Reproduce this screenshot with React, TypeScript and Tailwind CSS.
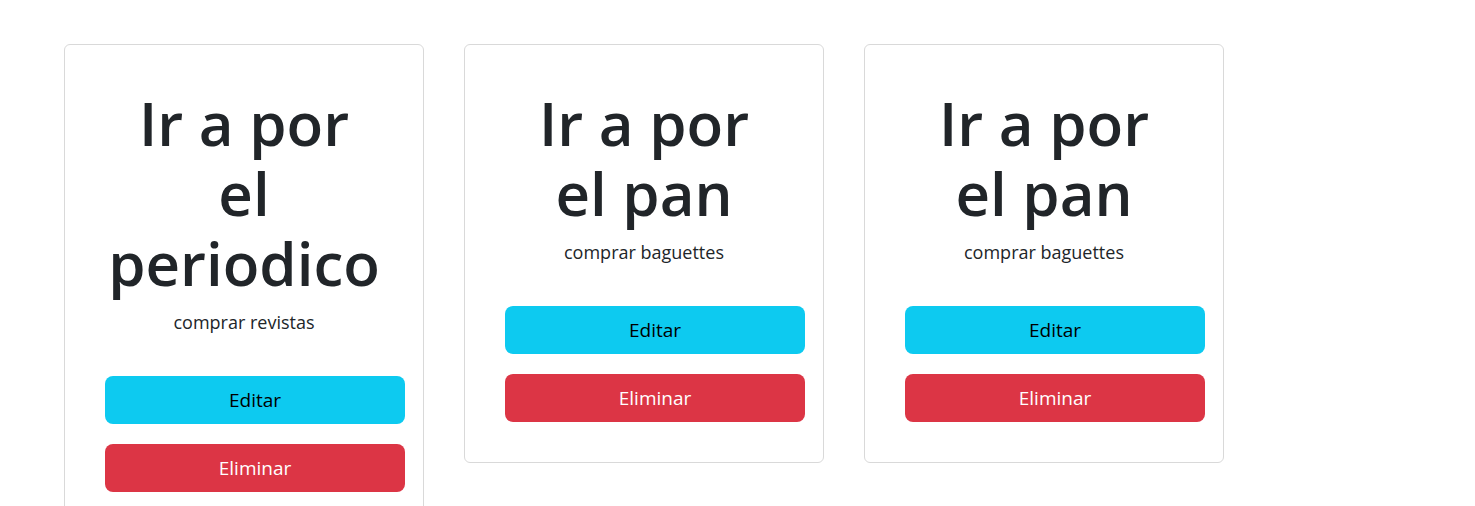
const tasks = [
  { id: 1, title: ['Ir a por', 'el', 'periodico'], desc: 'comprar revistas' },
  { id: 2, title: ['Ir a por', 'el pan'], desc: 'comprar baguettes' },
  { id: 3, title: ['Ir a por', 'el pan'], desc: 'comprar baguettes' },
];

function TaskCard({ title, desc }: { title: string[]; desc: string }) {
  return (
    <div className="w-[360px] shrink-0 rounded-[6px] border border-[#d9d9d9] bg-white px-10 pt-[43px] pb-10 text-center">
      <h1 className="mb-[11px] text-[60px] leading-[70px] font-semibold whitespace-nowrap text-[#212529]">
        {title.map((line, i) => (
          <span key={i} className="block">
            {line}
          </span>
        ))}
      </h1>
      <p className="text-[18px] leading-[27px] text-[#212529]">{desc}</p>
      <div className="mt-10 flex w-[300px] flex-col gap-5">
        <button className="h-12 w-full rounded-lg bg-[#0dcaf0] text-[19px] text-black">Editar</button>
        <button className="h-12 w-full rounded-lg bg-[#dc3545] text-[19px] text-white">Eliminar</button>
      </div>
    </div>
  );
}

export default function App() {
  return (
    <div className="min-h-screen bg-white font-['Open_Sans',sans-serif]">
      <div className="flex items-start gap-10 pt-11 pl-16">
        {tasks.map((t) => (
          <TaskCard key={t.id} title={t.title} desc={t.desc} />
        ))}
      </div>
    </div>
  );
}
